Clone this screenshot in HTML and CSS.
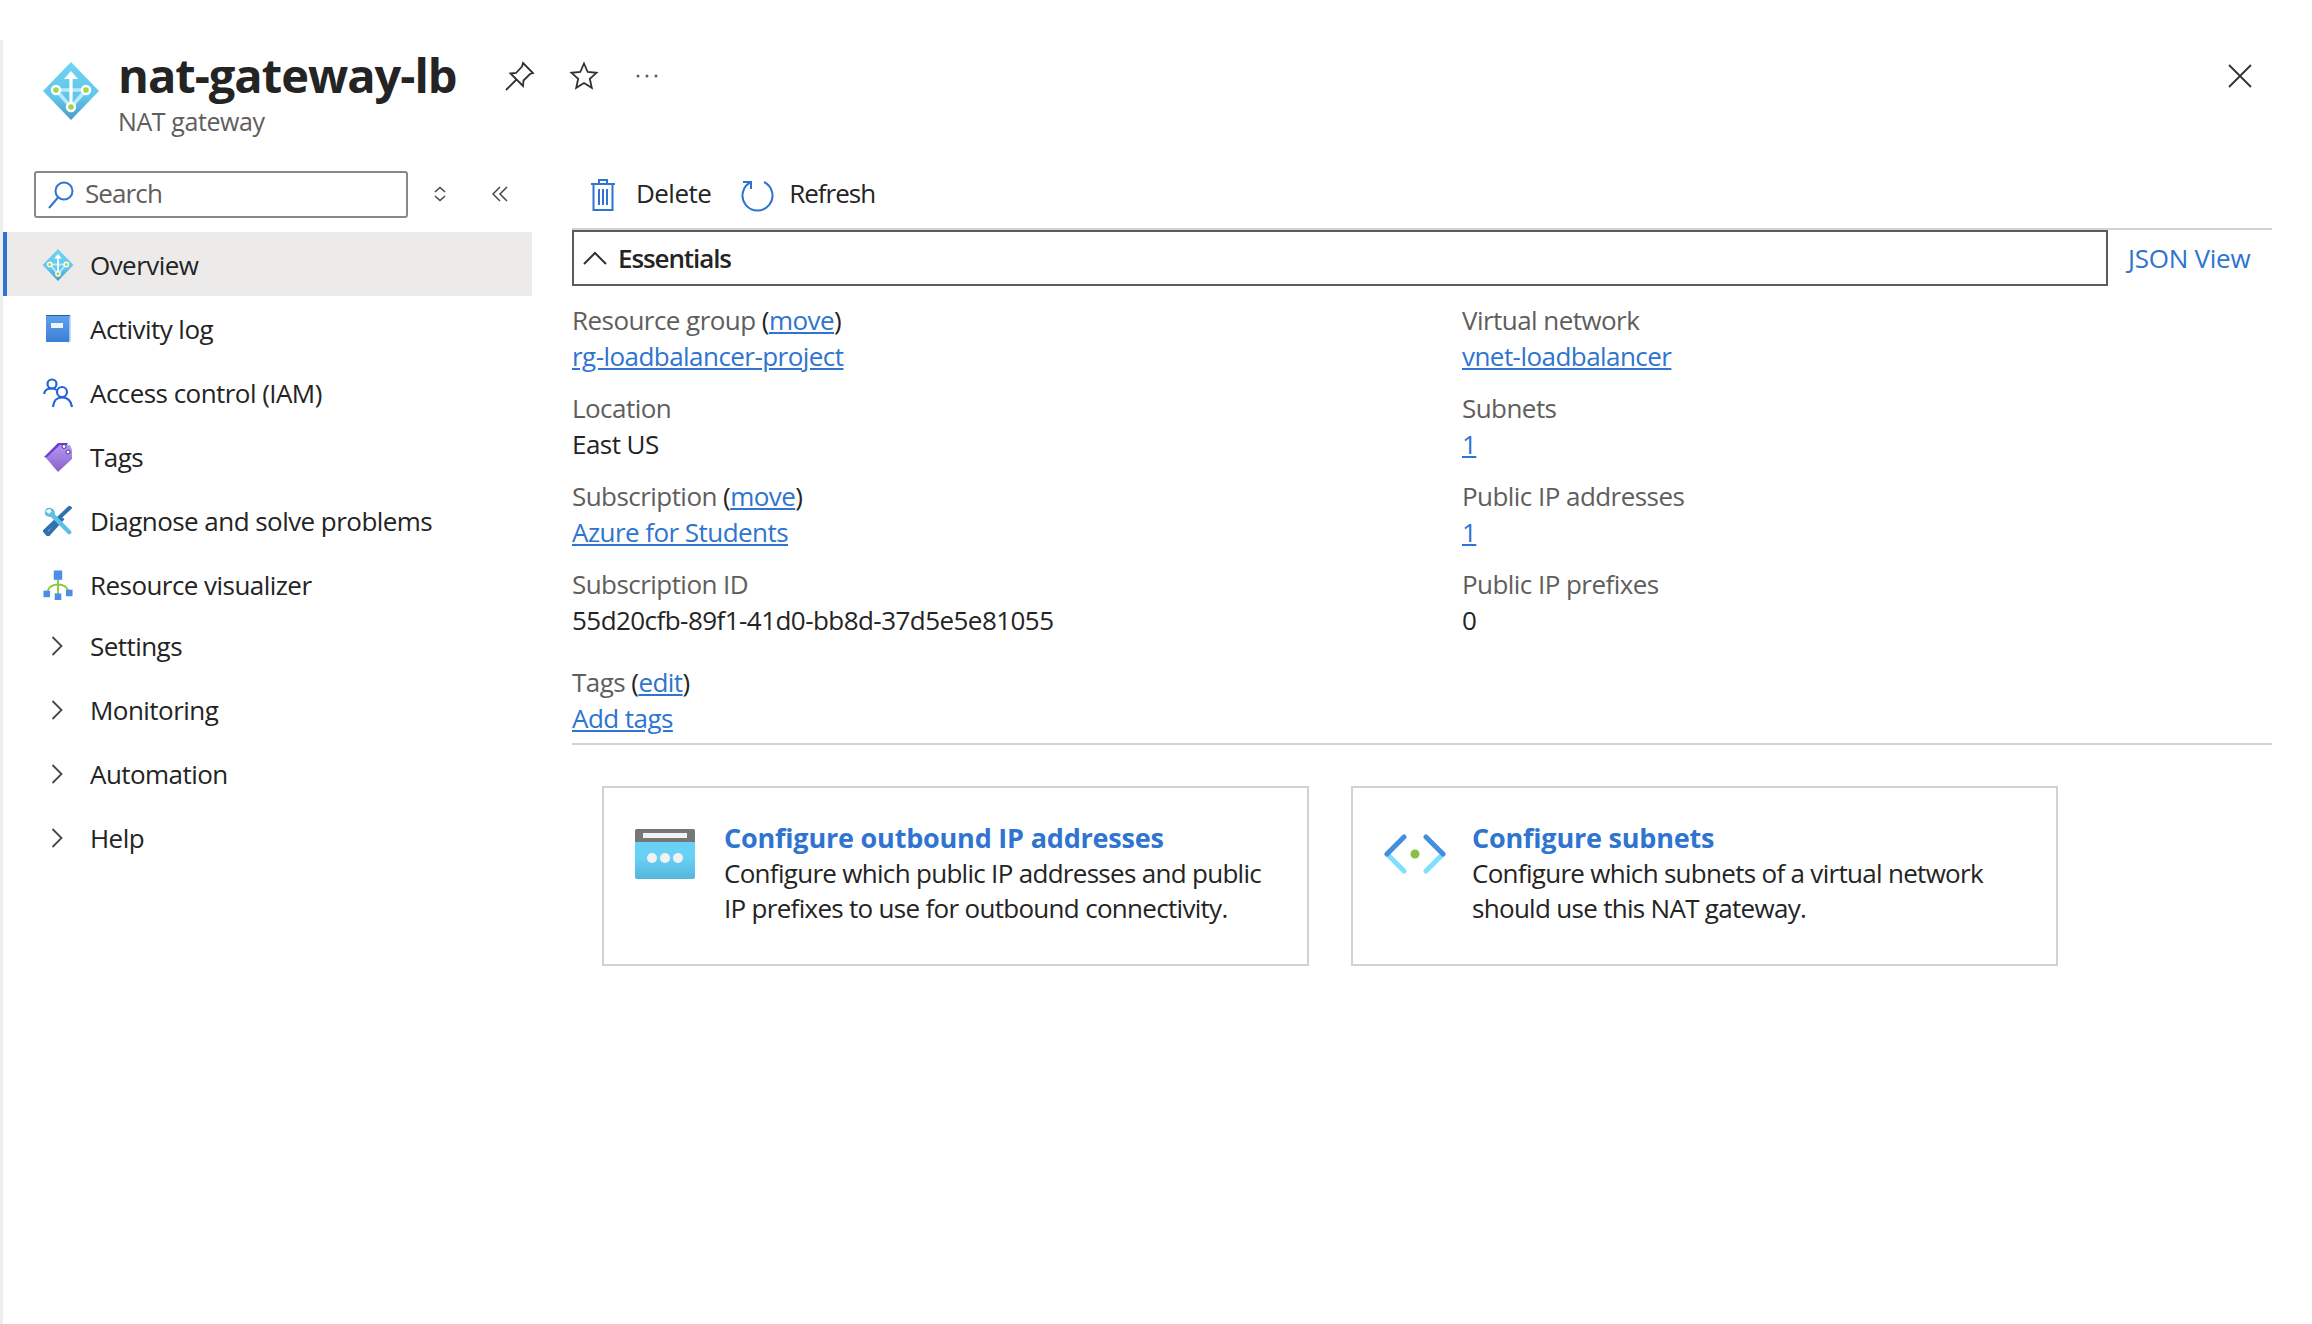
FILE: index.html
```html
<!DOCTYPE html>
<html lang="en">
<head>
  <meta charset="UTF-8">
  <title>nat-gateway-lb</title>
  <link rel="stylesheet" href="styles.css">
</head>
<body>
  <svg class="defs" width="0" height="0">
    <defs>
      <linearGradient id="diamond-fill" x1="0" y1="0" x2="0" y2="1">
        <stop offset="0" stop-color="#6fd3f5"/>
        <stop offset="0.6" stop-color="#62c6ea"/>
        <stop offset="1" stop-color="#4a9bc9"/>
      </linearGradient>
      <linearGradient id="book-fill" x1="0" y1="0" x2="0" y2="1">
        <stop offset="0" stop-color="#5ea0ef"/>
        <stop offset="1" stop-color="#3b7fd4"/>
      </linearGradient>
      <linearGradient id="tag-fill" x1="0" y1="0" x2="0" y2="1">
        <stop offset="0" stop-color="#b796f9"/>
        <stop offset="1" stop-color="#8661c5"/>
      </linearGradient>
      <linearGradient id="window-fill" x1="0" y1="0" x2="0" y2="1">
        <stop offset="0.55" stop-color="#68d2f6"/>
        <stop offset="1" stop-color="#55b6dc"/>
      </linearGradient>
      <symbol id="nat-icon" viewBox="0 0 56 58">
        <path d="M28 0 L56 29 L28 58 L0 29 Z" fill="url(#diamond-fill)"/>
        <path d="M28 45 L13 28 M28 45 L43 28 M13 28 H28 M43 28 H28" stroke="#b4ecfb" stroke-width="3.600" fill="none"/>
        <path d="M28 45 V15" stroke="#fff" stroke-width="3.200"/>
        <path d="M21 17 L28 9 L35 17 Z" fill="#fff"/>
        <circle cx="13" cy="28" r="4" fill="#9fd64b" stroke="#fff" stroke-width="2.400"/>
        <circle cx="43" cy="28" r="4" fill="#9fd64b" stroke="#fff" stroke-width="2.400"/>
        <circle cx="28" cy="45" r="4" fill="#9fd64b" stroke="#fff" stroke-width="2.400"/>
      </symbol>
    </defs>
  </svg>

  <div class="blade">
    <header class="blade-header">
      <svg class="res-logo"><use href="#nat-icon"/></svg>
      <div class="title-block">
        <h1>nat-gateway-lb</h1>
        <div class="subtitle">NAT gateway</div>
      </div>
      <div class="title-actions">
        <svg class="pin-icon" width="32" height="32" viewBox="0 0 32 32" fill="none" stroke="#323130" stroke-width="1.8">
          <path d="M2 30 L12 20 M19 3 L29 13 L26 14 L19.5 20.5 L19 26 L6.500 13.500 L12 13 L18 6.500 Z"/>
        </svg>
        <svg width="30" height="30" viewBox="0 0 30 30" fill="none" stroke="#323130" stroke-width="1.8">
          <path d="M15 2.500 L18.700 11 L27.500 11.800 L20.800 17.800 L22.800 26.800 L15 22 L7.200 26.800 L9.200 17.800 L2.500 11.800 L11.300 11 Z"/>
        </svg>
        <svg width="24" height="6" viewBox="0 0 24 6" fill="#605e5c">
          <circle cx="3" cy="3" r="1.500"/><circle cx="12" cy="3" r="1.500"/><circle cx="21" cy="3" r="1.500"/>
        </svg>
      </div>
      <svg class="close-btn" width="24" height="24" viewBox="0 0 24 24" stroke="#323130" stroke-width="1.800">
        <path d="M1 1 L23 23 M23 1 L1 23"/>
      </svg>
    </header>

    <div class="blade-body">
      <aside class="sidebar">
        <div class="search-row">
          <div class="search-box">
            <svg width="28" height="30" viewBox="0 0 28 30" fill="none" stroke="#2e74d0" stroke-width="2">
              <circle cx="17" cy="11" r="8.500"/>
              <path d="M11 17.500 L2 28"/>
            </svg>
            <span>Search</span>
          </div>
          <svg class="sort-icon" width="14" height="16" viewBox="0 0 14 16" fill="none" stroke="#484644" stroke-width="1.500">
            <path d="M2 6 L7 1.500 L12 6 M2 10 L7 14.500 L12 10"/>
          </svg>
          <svg class="collapse-icon" width="16" height="16" viewBox="0 0 16 16" fill="none" stroke="#484644" stroke-width="1.500">
            <path d="M8 1 L1 8 L8 15 M15 1 L8 8 L15 15"/>
          </svg>
        </div>

        <nav class="nav">
          <a class="nav-item active">
            <svg class="nav-icon"><use href="#nat-icon"/></svg>
            Overview
          </a>
          <a class="nav-item">
            <svg class="nav-icon" viewBox="0 0 30 30">
              <path d="M3 2 H26 V28 H3 Z" fill="url(#book-fill)"/>
              <path d="M26 1 H27.500 V27 L25 29 H24 L26 27 Z" fill="#9cc3ee"/>
              <path d="M3 1.500 H27" stroke="#2a5f9e" stroke-width="1"/>
              <rect x="8" y="9" width="12" height="5" fill="#eef4fb"/>
            </svg>
            Activity log
          </a>
          <a class="nav-item">
            <svg class="nav-icon" viewBox="0 0 30 30" fill="none" stroke="#2663d8" stroke-width="2.200">
              <circle cx="9" cy="6" r="4.500"/>
              <path d="M1 16 C2 11 5 10.500 9 10.500 C11 10.500 12.500 11 13.500 12"/>
              <circle cx="19" cy="14" r="5"/>
              <path d="M10 29 C10.500 22 14 19.500 19 19.500 C24 19.500 28 22 29 29"/>
            </svg>
            Access control (IAM)
          </a>
          <a class="nav-item">
            <svg class="nav-icon" viewBox="0 0 30 30">
              <path d="M1 15 L15 1 H25 L16 18 L7 17 Z" fill="#6a3fd0"/>
              <path d="M3 16 L17 3 H27 L29 8 V17 L15 30 Z" fill="url(#tag-fill)"/>
              <circle cx="21" cy="4.500" r="2" fill="#fff" stroke="#47338f" stroke-width="1"/>
              <circle cx="25" cy="10" r="2" fill="#fff" stroke="#47338f" stroke-width="1"/>
            </svg>
            Tags
          </a>
          <a class="nav-item">
            <svg class="nav-icon" viewBox="0 0 30 30" fill="none">
              <path d="M28 0.500 L2 25 L5 28.500 L20 12" stroke="#2f70b0" stroke-width="4"/>
              <path d="M8 2 C4 1 1 3.500 2 8 C3 11 6.500 11 8 11 L25 28 C27 29.500 29.500 27 28 25 L12 8.500 C12 5 11 2.500 6 1.500 L8.500 5.500 L6 8 L2.500 5" fill="#5cc0e6"/>
            </svg>
            Diagnose and solve problems
          </a>
          <a class="nav-item">
            <svg class="nav-icon" viewBox="0 0 32 32">
              <path d="M16 10 V28 M5 22 C7 17 12 15.500 16 15.500 C20 15.500 25 17 27 22" stroke="#8cc83c" stroke-width="2" fill="none"/>
              <rect x="11.500" y="0.500" width="9" height="10" fill="#4a8fe4"/>
              <rect x="0.500" y="22" width="7" height="7" fill="#4a8fe4"/>
              <rect x="24.500" y="21" width="7" height="7" fill="#4a8fe4"/>
              <rect x="12.500" y="25" width="7" height="7" fill="#4a8fe4"/>
            </svg>
            Resource visualizer
          </a>
          <div class="nav-groups">
            <a class="nav-item">
              <svg class="nav-chevron" width="12" height="20" viewBox="0 0 12 20" fill="none" stroke="#484644" stroke-width="1.800"><path d="M1.500 1 L10.500 10 L1.500 19"/></svg>
              Settings
            </a>
            <a class="nav-item">
              <svg class="nav-chevron" width="12" height="20" viewBox="0 0 12 20" fill="none" stroke="#484644" stroke-width="1.800"><path d="M1.500 1 L10.500 10 L1.500 19"/></svg>
              Monitoring
            </a>
            <a class="nav-item">
              <svg class="nav-chevron" width="12" height="20" viewBox="0 0 12 20" fill="none" stroke="#484644" stroke-width="1.800"><path d="M1.500 1 L10.500 10 L1.500 19"/></svg>
              Automation
            </a>
            <a class="nav-item">
              <svg class="nav-chevron" width="12" height="20" viewBox="0 0 12 20" fill="none" stroke="#484644" stroke-width="1.800"><path d="M1.500 1 L10.500 10 L1.500 19"/></svg>
              Help
            </a>
          </div>
        </nav>
      </aside>

      <main class="main">
        <div class="toolbar">
          <button class="tool-btn">
            <svg width="26" height="34" viewBox="0 0 26 34" fill="none" stroke="#2e74d0" stroke-width="2">
              <path d="M1 6 H25 M9 6 V2 H17 V6 M3.500 6 V32 H22.500 V6 M9 11 V27 M13 11 V27 M17 11 V27"/>
            </svg>
            <span>Delete</span>
          </button>
          <button class="tool-btn refresh-btn">
            <svg width="34" height="34" viewBox="0 0 34 34" fill="none" stroke="#2e74d0" stroke-width="2">
              <path d="M11 4 A15 15 0 1 0 24 4"/>
              <path d="M11 11 V4 H3"/>
            </svg>
            <span>Refresh</span>
          </button>
        </div>

        <div class="essentials-bar">
          <div class="essentials-toggle">
            <svg width="24" height="14" viewBox="0 0 24 14" fill="none" stroke="#323130" stroke-width="2"><path d="M1 13 L12 2 L23 13"/></svg>
            <span>Essentials</span>
          </div>
          <a class="json-link">JSON View</a>
        </div>

        <div class="fields">
          <div class="field">
            <div class="field-label">Resource group <span class="paren">(<a class="link">move</a>)</span></div>
            <div><a class="link">rg-loadbalancer-project</a></div>
          </div>
          <div class="field">
            <div class="field-label">Virtual network</div>
            <div><a class="link">vnet-loadbalancer</a></div>
          </div>
          <div class="field">
            <div class="field-label">Location</div>
            <div>East US</div>
          </div>
          <div class="field">
            <div class="field-label">Subnets</div>
            <div><a class="link">1</a></div>
          </div>
          <div class="field">
            <div class="field-label">Subscription <span class="paren">(<a class="link">move</a>)</span></div>
            <div><a class="link">Azure for Students</a></div>
          </div>
          <div class="field">
            <div class="field-label">Public IP addresses</div>
            <div><a class="link">1</a></div>
          </div>
          <div class="field">
            <div class="field-label">Subscription ID</div>
            <div>55d20cfb-89f1-41d0-bb8d-37d5e5e81055</div>
          </div>
          <div class="field">
            <div class="field-label">Public IP prefixes</div>
            <div>0</div>
          </div>
        </div>

        <div class="tags-field">
          <div class="field-label">Tags <span class="paren">(<a class="link">edit</a>)</span></div>
          <div><a class="link">Add tags</a></div>
        </div>

        <div class="cards">
          <div class="card">
            <svg class="card-icon" width="60" height="50" viewBox="0 0 60 50">
              <rect x="0" y="0" width="60" height="50" rx="2" fill="url(#window-fill)"/>
              <path d="M2 0 H58 A2 2 0 0 1 60 2 V13 H0 V2 A2 2 0 0 1 2 0 Z" fill="#767676"/>
              <rect x="8" y="4" width="44" height="5" fill="#f2f2f2"/>
              <circle cx="17" cy="29" r="5" fill="#f2f2f2"/>
              <circle cx="30" cy="29" r="5" fill="#f2f2f2"/>
              <circle cx="43" cy="29" r="5" fill="#f2f2f2"/>
            </svg>
            <div class="card-text">
              <a class="card-title">Configure outbound IP addresses</a>
              <p>Configure which public IP addresses and public IP prefixes to use for outbound connectivity.</p>
            </div>
          </div>
          <div class="card">
            <svg class="card-icon subnet-icon" width="62" height="40" viewBox="0 0 62 40" fill="none" stroke-width="5" stroke-linecap="round">
              <path d="M3 20 L20 37 M59 20 L42 37" stroke="#7fe0fb"/>
              <path d="M20 3 L3 20 M42 3 L59 20" stroke="#428fdf"/>
              <circle cx="31" cy="20" r="4.500" fill="#86c23f" stroke="none"/>
            </svg>
            <div class="card-text">
              <a class="card-title">Configure subnets</a>
              <p>Configure which subnets of a virtual network should use this NAT gateway.</p>
            </div>
          </div>
        </div>
      </main>
    </div>
  </div>
</body>
</html>
```

FILE: styles.css
```css
* {
  box-sizing: border-box;
}

html, body {
  margin: 0;
  height: 100%;
  background: #fff;
}

body {
  font-family: "Open Sans", "Noto Sans", sans-serif;
  font-size: 26px;
  letter-spacing: -0.55px;
  line-height: 36px;
  color: #242424;
  overflow: hidden;
}

.defs {
  display: block;
}

.blade {
  margin-top: 40px;
  height: 1284px;
  border-left: 3px solid #eee;
}

.blade-header {
  display: flex;
  height: 131px;
  padding: 22px 60px 0 40px;
}

.res-logo {
  width: 56px;
  height: 58px;
  margin-right: 19px;
}

.title-block h1 {
  margin: 0;
  font-size: 47px;
  font-weight: 700;
  line-height: 26px;
  letter-spacing: -1px;
}

.subtitle {
  margin-top: 17px;
  font-size: 25px;
  line-height: 32px;
  letter-spacing: -0.4px;
  color: #605e5c;
}

.title-actions {
  display: flex;
  align-items: center;
  gap: 36px;
  height: 27px;
  margin-left: 48px;
}

.pin-icon {
  margin-right: -3px;
}

.close-btn {
  margin-left: auto;
  margin-top: 2px;
}

.blade-body {
  display: flex;
}

.sidebar {
  width: 529px;
  flex: none;
}

.search-row {
  display: flex;
  align-items: center;
  height: 47px;
  padding-left: 31px;
}

.search-box {
  display: flex;
  align-items: center;
  gap: 10px;
  width: 374px;
  height: 47px;
  padding-left: 11px;
  border: 2px solid #8a8886;
  border-radius: 3px;
  color: #605e5c;
}

.search-box span {
  margin-bottom: 3px;
  letter-spacing: -0.9px;
}

.sort-icon {
  margin: 0 0 2px 25px;
}

.collapse-icon {
  margin: 0 0 2px 45px;
}

.nav {
  margin-top: 14px;
}

.nav-item {
  display: flex;
  align-items: center;
  height: 64px;
  padding: 2px 0 0 87px;
  position: relative;
}

.nav-item.active {
  background: #edebe9;
  border-left: 4px solid #2e74d0;
  padding-left: 83px;
  font-weight: 500;
}

.nav-icon {
  position: absolute;
  left: 40px;
  top: 18px;
  width: 30px;
  height: 30px;
}

.nav-item.active .nav-icon {
  left: 35px;
  top: 17px;
  width: 32px;
  height: 32px;
}

.nav-chevron {
  position: absolute;
  left: 48px;
  top: 23px;
}

.nav-groups {
  margin-top: -3px;
}

.main {
  flex: 1;
  margin: 0 40px;
}

.toolbar {
  display: flex;
  align-items: center;
  height: 47px;
  gap: 29px;
  padding-left: 18px;
}

.tool-btn {
  display: flex;
  align-items: center;
  gap: 20px;
  padding: 0;
  border: none;
  background: none;
  font: inherit;
  letter-spacing: inherit;
  color: inherit;
}

.tool-btn span {
  margin-bottom: 3px;
}

.refresh-btn {
  gap: 15px;
  letter-spacing: -1px;
}

.essentials-bar {
  display: flex;
  align-items: center;
  margin-top: 10px;
  border-top: 2px solid #d2d2d2;
}

.essentials-toggle {
  display: flex;
  align-items: center;
  gap: 11px;
  width: 1536px;
  height: 56px;
  padding-left: 9px;
  border: 2px solid #5c5c5c;
  font-weight: 600;
  letter-spacing: -1.1px;
}

.essentials-toggle span {
  margin-bottom: 1px;
}

.json-link {
  margin-left: 20px;
  color: #2e74d0;
  letter-spacing: -0.25px;
}

.fields {
  display: grid;
  grid-template-columns: 890px 1fr;
  row-gap: 16px;
  padding-top: 16px;
}

.field-label {
  color: #605e5c;
}

.paren {
  color: #242424;
}

.link {
  color: #2e74d0;
  text-decoration: underline;
}

.tags-field {
  margin-top: 26px;
  padding-bottom: 7px;
  border-bottom: 2px solid #d2d2d2;
}

.cards {
  display: flex;
  gap: 42px;
  margin: 41px 0 0 30px;
}

.card {
  display: flex;
  width: 707px;
  height: 180px;
  padding: 32px 0 0 31px;
  border: 2px solid #d2d2d2;
}

.card-icon {
  flex: none;
  margin: 9px 29px 0 0;
}

.subnet-icon {
  margin: 14px 26px 0 0;
}

.card-title {
  display: block;
  font-size: 27px;
  font-weight: 700;
  letter-spacing: -0.2px;
  color: #2e74d0;
}

.card-text p {
  max-width: 560px;
  margin: 0;
  line-height: 35px;
  letter-spacing: -0.7px;
}
```
